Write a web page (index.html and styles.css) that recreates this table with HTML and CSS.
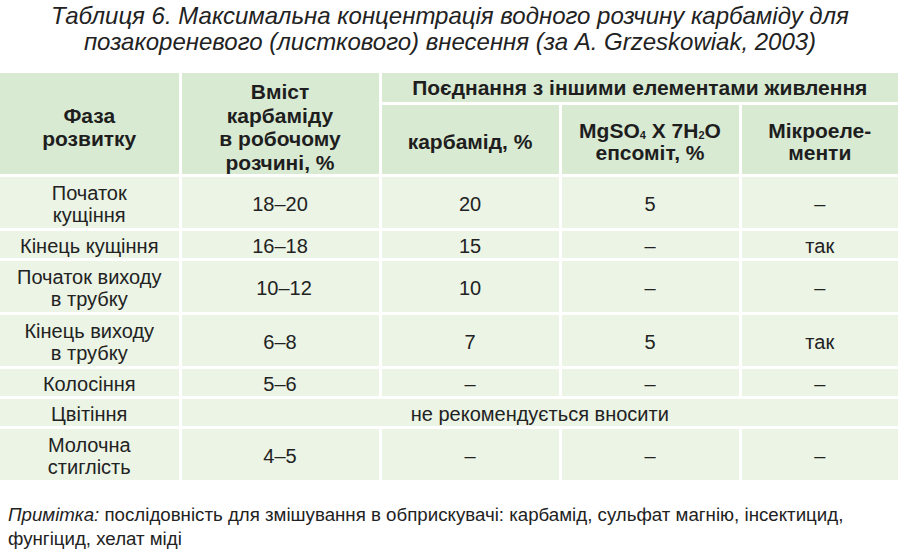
FILE: index.html
```html
<!DOCTYPE html>
<html lang="uk">
<head>
<meta charset="utf-8">
<title>Таблиця 6</title>
<link rel="stylesheet" href="styles.css">
</head>
<body>
<div class="page">
  <h1 class="caption">Таблиця 6. Максимальна концентрація водного розчину карбаміду для<br>позакореневого (листкового) внесення (за A. Grzeskowiak, 2003)</h1>
  <table class="tbl">
    <colgroup>
      <col class="c1"><col class="c2"><col class="c3"><col class="c4"><col class="c5">
    </colgroup>
    <thead>
      <tr class="h1">
        <th rowspan="2" class="tall">Фаза<br>розвитку</th>
        <th rowspan="2" class="tall">Вміст<br>карбаміду<br>в робочому<br>розчині, %</th>
        <th colspan="3">Поєднання з іншими елементами живлення</th>
      </tr>
      <tr class="h2">
        <th>карбамід, %</th>
        <th>MgSO<sub>4</sub> X 7H<sub>2</sub>O<br>епсоміт, %</th>
        <th>Мікроеле-<br>менти</th>
      </tr>
    </thead>
    <tbody>
      <tr class="r2l"><td>Початок<br>кущіння</td><td>18–20</td><td>20</td><td>5</td><td>–</td></tr>
      <tr class="r1l"><td>Кінець кущіння</td><td>16–18</td><td>15</td><td>–</td><td>так</td></tr>
      <tr class="r2l"><td>Початок виходу<br>в трубку</td><td class="shift">10–12</td><td>10</td><td>–</td><td>–</td></tr>
      <tr class="r2l"><td>Кінець виходу<br>в трубку</td><td>6–8</td><td>7</td><td>5</td><td>так</td></tr>
      <tr class="r1l"><td>Колосіння</td><td>5–6</td><td>–</td><td>–</td><td>–</td></tr>
      <tr class="r1l"><td>Цвітіння</td><td colspan="4">не рекомендується вносити</td></tr>
      <tr class="r2l"><td>Молочна<br>стиглість</td><td>4–5</td><td>–</td><td>–</td><td>–</td></tr>
    </tbody>
  </table>
  <p class="note"><em>Примітка:</em> послідовність для змішування в обприскувачі: карбамід, сульфат магнію, інсектицид,<br>фунгіцид, хелат міді</p>
</div>
</body>
</html>
```
FILE: styles.css
```css
html, body {
  margin: 0;
  padding: 0;
  background: #ffffff;
}
body {
  font-family: "Liberation Sans", Arial, sans-serif;
  color: #1f1f1f;
}
.page {
  width: 900px;
}
.caption {
  margin: 0;
  padding-top: 3px;
  font-size: 24px;
  line-height: 26px;
  font-style: italic;
  font-weight: normal;
  text-align: center;
  color: #222;
}
.tbl {
  margin-top: 18px;
  width: 898px;
  border-collapse: collapse;
  border-style: hidden;
  table-layout: fixed;
}
.c1 { width: 180px; }
.c2 { width: 200px; }
.c3 { width: 180px; }
.c4 { width: 180px; }
.c5 { width: 158px; }
.tbl th, .tbl td {
  border: 3px solid #ffffff;
  padding: 0;
  text-align: center;
  vertical-align: middle;
  white-space: nowrap;
}
.tbl th {
  background: #d9ead3;
  font-weight: bold;
  font-size: 21px;
  line-height: 23.5px;
  color: #1e1e1e;
}
.tbl th.tall {
  padding-top: 7px;
}
.h2 th {
  padding-top: 4px;
  line-height: 22px;
}
.tbl td {
  background: #ebf4e5;
  font-size: 20px;
  line-height: 22px;
  color: #222;
  padding-top: 3px;
}
.tbl td.shift {
  padding-left: 8px;
}
.h1 th { height: 29px; }
.h2 th { height: 65px; }
.r1l td { height: 24px; }
.r2l td { height: 48px; }
.tbl sub {
  font-size: 11px;
  line-height: 0;
  vertical-align: -1px;
}
.note {
  margin: 23px 0 0 0;
  padding-left: 8px;
  font-size: 18.7px;
  line-height: 24px;
  color: #222;
}
.note em {
  font-style: italic;
}
```
